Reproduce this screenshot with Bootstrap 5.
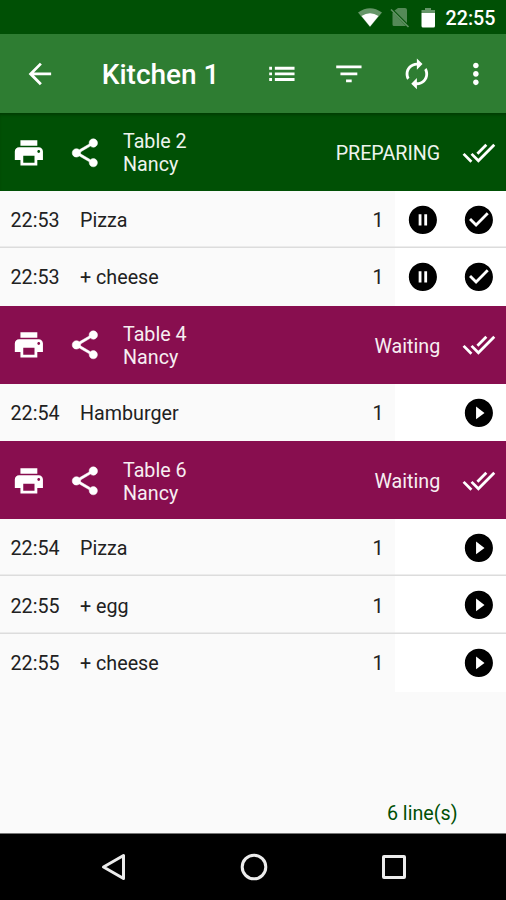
<!DOCTYPE html>
<html lang="en">
<head>
<meta charset="utf-8">
<meta name="viewport" content="width=device-width, initial-scale=1">
<title>Kitchen 1</title>
<link href="https://cdn.jsdelivr.net/npm/bootstrap@5.3.0/dist/css/bootstrap.min.css" rel="stylesheet">
<style>
body{font-family:Roboto,"Liberation Sans",sans-serif;font-size:19.7px;line-height:23px;background:#fafafa;color:#212121;height:900px;overflow:hidden}
.ic{width:33.75px;height:33.75px;fill:currentColor;flex:none;display:block}
.statusbar{height:34px;background:#005005;padding-right:10.5px;font-weight:500;padding-top:2px}
.appbar{height:79.2px;background:#2e7d32;padding:1px 13.5px 0 23px}
.appbar h1{font-size:28px;font-weight:500;margin:2px 0 0 45px;line-height:34px}
.order{height:77.5px;background:#880e4f;color:#f7eef2;padding:1px 10.5px 0 11.5px}
.order.preparing{background:#005005;color:#eef4ee;box-shadow:inset 0 3px 3px -1px #003d03}
.order .ic{color:#fff}
.who{margin-left:21.5px;padding-top:2px}
.state{margin-right:21.5px;padding-top:2px}
.line{height:57.7px;box-shadow:inset 0 -1.4px #dcdcdc}
.line:last-child{box-shadow:none}
.at{width:69.5px}
.info{padding:1.5px 11px 0 10.5px}
.acts{width:111.5px;padding-right:10.5px;gap:22.5px;color:#000;background:#fff;box-shadow:inset 0 -1.4px #dcdcdc}
.line:last-child .acts{box-shadow:none}
.total{color:#005005;padding:0 48.5px 8px 0}
.sysnav{height:67px;background:#000;color:#ececec;border-top:1px solid #777;padding:0 97px 0 98px}
.sysnav svg{width:30px;height:30px;fill:none;stroke:currentColor;stroke-width:3}
</style>
</head>
<body class="d-flex flex-column">
<svg class="d-none">
<symbol id="print" viewBox="0 0 24 24"><path d="M19 8H5c-1.660 0-3 1.340-3 3v6h4v4h12v-4h4v-6c0-1.660-1.340-3-3-3zm-3 11H8v-5h8v5zm3-7c-.55 0-1-.45-1-1s.45-1 1-1 1 .45 1 1-.45 1-1 1zm-1-9H6v4h12V3z"/></symbol>
<symbol id="share" viewBox="0 0 24 24"><path d="M18 16.080c-.76 0-1.440.3-1.960.77L8.910 12.700c.05-.23.09-.46.09-.7s-.04-.47-.09-.7l7.050-4.110c.54.5 1.250.81 2.040.81 1.660 0 3-1.340 3-3s-1.340-3-3-3-3 1.340-3 3c0 .24.04.47.09.7L8.040 9.810C7.500 9.310 6.790 9 6 9c-1.660 0-3 1.340-3 3s1.340 3 3 3c.79 0 1.500-.31 2.040-.81l7.120 4.160c-.05.21-.08.43-.08.65 0 1.610 1.310 2.920 2.920 2.920s2.920-1.310 2.920-2.920-1.310-2.920-2.920-2.920z" stroke="currentColor" stroke-width=".35"/></symbol>
<symbol id="all" viewBox="0 0 24 24"><path d="M18 7l-1.410-1.410-6.340 6.340 1.410 1.410L18 7zm4.240-1.410L11.660 16.170 7.480 12l-1.410 1.410L11.660 19l12-12-1.420-1.410zM.41 13.410L6 19l1.410-1.410L1.830 12 .41 13.410z"/></symbol>
<symbol id="pause" viewBox="0 0 24 24"><path d="M12 2C6.480 2 2 6.480 2 12s4.480 10 10 10 10-4.480 10-10S17.520 2 12 2zm-1 14H9V8h2v8zm4 0h-2V8h2v8z"/></symbol>
<symbol id="done" viewBox="0 0 24 24"><path d="M12 2C6.480 2 2 6.480 2 12s4.480 10 10 10 10-4.480 10-10S17.520 2 12 2zm-2 15l-5-5 1.410-1.410L10 14.170l7.590-7.590L19 8l-9 9z"/></symbol>
<symbol id="play" viewBox="0 0 24 24"><path d="M12 2C6.480 2 2 6.480 2 12s4.480 10 10 10 10-4.480 10-10S17.520 2 12 2zm-2 14.500v-9l6 4.500-6 4.500z"/></symbol>
</svg>

<div class="statusbar d-flex align-items-center justify-content-end text-white">
  <svg width="24" height="22" viewBox="0 0 24 22"><path d="M0 5.500Q12-3 24 5.500L12 20z" fill="#fff" opacity=".4"/><path d="M3.500 9Q12 3.500 20.500 9L12 19.500z" fill="#fff"/></svg>
  <svg class="ms-2" width="20" height="22" viewBox="0 0 20 22"><path d="M8 1h7q2 0 2 2v13L4.500 3.500zM3 5.500L16 19H4q-1.500 0-1.500-1.500V6z" fill="#fff" opacity=".33"/><path d="M1 2.500L18.500 20" stroke="#fff" opacity=".38" stroke-width="1.600"/></svg>
  <svg class="ms-2 me-2" width="20" height="22" viewBox="0 0 20 22"><path d="M3.500 6V3h3.500V1h6v2h4v3z" fill="#fff" opacity=".4"/><path d="M3.500 6H17v13q0 1.500-1.500 1.500H5Q3.500 20.500 3.500 19z" fill="#fff"/></svg>
  <span>22:55</span>
</div>

<header class="appbar d-flex align-items-center text-white">
  <svg class="ic" viewBox="0 0 24 24"><path d="M20 11H7.830l5.590-5.590L12 4l-8 8 8 8 1.410-1.410L7.830 13H20v-2z"/></svg>
  <h1>Kitchen 1</h1>
  <div class="d-flex ms-auto">
    <svg class="ic" viewBox="0 0 24 24"><path d="M3 13h2v-2H3v2zm0 4h2v-2H3v2zm0-8h2V7H3v2zm4 4h14v-2H7v2zm0 4h14v-2H7v2zM7 7v2h14V7H7z"/></svg>
    <svg class="ic" style="margin-left:33.75px" viewBox="0 0 24 24"><path d="M10 18h4v-2h-4v2zM3 6v2h18V6H3zm3 7h12v-2H6v2z"/></svg>
    <svg class="ic" style="margin-left:33.75px" viewBox="0 0 24 24"><path d="M12 6v3l4-4-4-4v3c-4.420 0-8 3.580-8 8 0 1.570.46 3.030 1.240 4.260L6.700 14.800c-.45-.83-.7-1.790-.7-2.800 0-3.310 2.690-6 6-6zm6.760 1.740L17.300 9.200c.44.840.7 1.790.7 2.800 0 3.310-2.690 6-6 6v-3l-4 4 4 4v-3c4.420 0 8-3.580 8-8 0-1.570-.46-3.030-1.240-4.260z"/></svg>
    <svg class="ic" style="margin-left:25.5px" viewBox="0 0 24 24"><path d="M12 8c1.100 0 2-.9 2-2s-.9-2-2-2-2 .9-2 2 .9 2 2 2zm0 2c-1.100 0-2 .9-2 2s.9 2 2 2 2-.9 2-2-.9-2-2-2zm0 6c-1.100 0-2 .9-2 2s.9 2 2 2 2-.9 2-2-.9-2-2-2z"/></svg>
  </div>
</header>

<main class="flex-grow-1">
  <section>
    <div class="order preparing d-flex align-items-center">
      <svg class="ic"><use href="#print"/></svg><svg class="ic" style="margin-left:22.5px"><use href="#share"/></svg>
      <div class="who">Table 2<br>Nancy</div><div class="state ms-auto">PREPARING</div><svg class="ic"><use href="#all"/></svg>
    </div>
    <div class="line d-flex">
      <div class="info d-flex align-items-center flex-grow-1"><span class="at">22:53</span><span>Pizza</span><span class="ms-auto">1</span></div>
      <div class="acts d-flex align-items-center justify-content-end"><svg class="ic"><use href="#pause"/></svg><svg class="ic"><use href="#done"/></svg></div>
    </div>
    <div class="line d-flex">
      <div class="info d-flex align-items-center flex-grow-1"><span class="at">22:53</span><span>+ cheese</span><span class="ms-auto">1</span></div>
      <div class="acts d-flex align-items-center justify-content-end"><svg class="ic"><use href="#pause"/></svg><svg class="ic"><use href="#done"/></svg></div>
    </div>
  </section>
  <section>
    <div class="order d-flex align-items-center">
      <svg class="ic"><use href="#print"/></svg><svg class="ic" style="margin-left:22.5px"><use href="#share"/></svg>
      <div class="who">Table 4<br>Nancy</div><div class="state ms-auto">Waiting</div><svg class="ic"><use href="#all"/></svg>
    </div>
    <div class="line d-flex">
      <div class="info d-flex align-items-center flex-grow-1"><span class="at">22:54</span><span>Hamburger</span><span class="ms-auto">1</span></div>
      <div class="acts d-flex align-items-center justify-content-end"><svg class="ic"><use href="#play"/></svg></div>
    </div>
  </section>
  <section>
    <div class="order d-flex align-items-center">
      <svg class="ic"><use href="#print"/></svg><svg class="ic" style="margin-left:22.5px"><use href="#share"/></svg>
      <div class="who">Table 6<br>Nancy</div><div class="state ms-auto">Waiting</div><svg class="ic"><use href="#all"/></svg>
    </div>
    <div class="line d-flex">
      <div class="info d-flex align-items-center flex-grow-1"><span class="at">22:54</span><span>Pizza</span><span class="ms-auto">1</span></div>
      <div class="acts d-flex align-items-center justify-content-end"><svg class="ic"><use href="#play"/></svg></div>
    </div>
    <div class="line d-flex">
      <div class="info d-flex align-items-center flex-grow-1"><span class="at">22:55</span><span>+ egg</span><span class="ms-auto">1</span></div>
      <div class="acts d-flex align-items-center justify-content-end"><svg class="ic"><use href="#play"/></svg></div>
    </div>
    <div class="line d-flex">
      <div class="info d-flex align-items-center flex-grow-1"><span class="at">22:55</span><span>+ cheese</span><span class="ms-auto">1</span></div>
      <div class="acts d-flex align-items-center justify-content-end"><svg class="ic"><use href="#play"/></svg></div>
    </div>
  </section>
</main>

<div class="total text-end">6 line(s)</div>
<nav class="sysnav d-flex align-items-center justify-content-between">
  <svg viewBox="0 0 30 30"><path d="M25.500 3.500v23L5.500 15z" stroke-linejoin="round"/></svg>
  <svg viewBox="0 0 30 30"><circle cx="15" cy="15" r="11.800"/></svg>
  <svg viewBox="0 0 30 30"><rect x="4.500" y="4.500" width="21" height="21" rx=".5"/></svg>
</nav>
<script src="https://cdn.jsdelivr.net/npm/bootstrap@5.3.0/dist/js/bootstrap.bundle.min.js"></script>
</body>
</html>
